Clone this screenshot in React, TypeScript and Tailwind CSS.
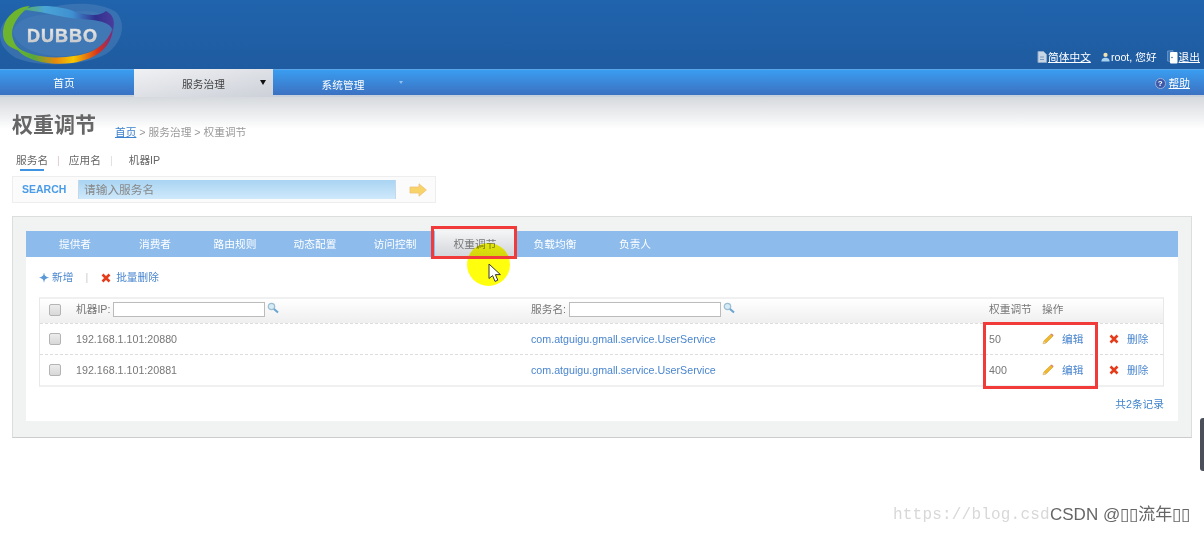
import React from "react";

const font = { fontFamily: '"Liberation Sans","Noto Sans CJK SC",sans-serif' };

function Logo() {
  return (
    <svg width="124" height="68" viewBox="0 0 124 68" className="shrink-0">
      <defs>
        <linearGradient id="ring" x1="0" y1="0" x2="1" y2="0">
          <stop offset="0" stopColor="#6cb52d" />
          <stop offset="0.2" stopColor="#58a83a" />
          <stop offset="0.42" stopColor="#e98a0c" />
          <stop offset="0.6" stopColor="#f5c800" />
          <stop offset="0.85" stopColor="#d9301c" />
          <stop offset="1" stopColor="#7a2a80" />
        </linearGradient>
        <linearGradient id="top" x1="0" y1="0" x2="1" y2="0">
          <stop offset="0" stopColor="#5ab04a" />
          <stop offset="0.25" stopColor="#4aa4d6" />
          <stop offset="0.55" stopColor="#3f8fd0" />
          <stop offset="0.8" stopColor="#30308e" />
          <stop offset="1" stopColor="#4a3c9c" />
        </linearGradient>
        <linearGradient id="word" x1="0" y1="0" x2="0" y2="1">
          <stop offset="0" stopColor="#f2f2f2" />
          <stop offset="1" stopColor="#b9bcc0" />
        </linearGradient>
      </defs>
      <path d="M0 33C2 14 24 6 52 7C74 2 100 2 116 12C126 22 124 42 106 54C84 66 40 68 16 58C6 52 -1 44 0 33Z" fill="#4d7fb8" opacity="0.55" />
      <path d="M13 33C15 18 36 13 60 15C84 8 106 10 111 24C114 38 100 50 80 54C56 60 20 54 13 33Z" fill="#3f78b4" />
      <path d="M3 34C3 18 15 7 30 6C22 12 12 22 12 34C13 43 17 48 24 52C11 49 3 44 3 34Z" fill="#6db52e" />
      <path d="M14 45C24 54 44 59 66 57C88 55 104 50 113 28C112 46 98 59 72 63C46 66 22 60 14 45Z" fill="url(#ring)" />
      <path d="M22 10C36 3 62 6 76 12C90 16 100 16 106 11C114 15 115 22 113 30C108 20 94 20 78 19C58 17 38 10 22 10Z" fill="url(#top)" />
      <text x="27" y="42" fontFamily="Liberation Sans" fontWeight="700" fontSize="18" letterSpacing="1" fill="url(#word)" stroke="#d8d8d8" strokeWidth="0.5">DUBBO</text>
    </svg>
  );
}

function Pencil() {
  return (
    <svg width="12" height="12" viewBox="0 0 12 12" className="shrink-0">
      <path d="M1 10.8L1.8 8 8.8 1.2 10.9 3.2 3.9 10.1Z" fill="#f0b92c" stroke="#c98b1a" strokeWidth="0.5" />
      <path d="M8.8 1.2L9.7 .4 11.6 2.3 10.9 3.2Z" fill="#d9776a" />
      <path d="M1 10.8L1.8 8 3.9 10.1Z" fill="#e8d2a8" />
    </svg>
  );
}

function Cross({ s = 10 }: { s?: number }) {
  return (
    <svg width={s} height={s} viewBox="0 0 10 10" className="shrink-0">
      <path d="M1.5 1.5L8.5 8.5M8.5 1.5L1.5 8.5" stroke="#e53d1c" strokeWidth="2.6" />
    </svg>
  );
}

function Lens() {
  return (
    <svg width="12" height="12" viewBox="0 0 12 12" className="shrink-0">
      <circle cx="4.5" cy="4.5" r="3.2" fill="#d5ebf6" stroke="#9dbdd2" strokeWidth="1.2" />
      <path d="M7 7L11 10.6" stroke="#6aa5d0" strokeWidth="2" />
    </svg>
  );
}

function Check() {
  return <span className="block w-[12px] h-[12px] rounded-[2px] border border-[#b4b4b4] bg-gradient-to-b from-[#ececec] to-[#d8d8d8]" />;
}

const topTabs = ["提供者", "消费者", "路由规则", "动态配置", "访问控制"];
const rows = [
  { ip: "192.168.1.101:20880", w: "50" },
  { ip: "192.168.1.101:20881", w: "400" },
];

export default function App() {
  return (
    <div className="relative w-[1204px] h-[533px] overflow-hidden bg-white text-[10.7px] text-[#666666]" style={font}>
      <header className="h-[69px] flex justify-between bg-gradient-to-b from-[#2064ad] to-[#1f5ba0]">
        <Logo />
        <div className="flex items-end pr-[4px] pb-[4px] text-white">
          <span className="flex items-center gap-px">
            <svg width="10" height="12" viewBox="0 0 10 12"><path d="M1 .5H6.5L9.5 3.5V11.5H1Z" fill="#c9d6e6" stroke="#8fa9c8" /><path d="M3 6H7M3 8.5H7" stroke="#7f9abd" /></svg>
            <span className="underline">简体中文</span>
          </span>
          <span className="ml-[10px] flex items-center gap-px">
            <svg width="9" height="12" viewBox="0 0 11 12"><circle cx="5.5" cy="3.5" r="2.6" fill="#f2e3b0" /><path d="M.5 11.5C.5 8 3 7 5.5 7S10.5 8 10.5 11.5Z" fill="#a8d2f0" /></svg>
            <span>root, 您好</span>
          </span>
          <span className="ml-[10px] flex items-center gap-px">
            <svg width="11" height="14" viewBox="0 0 11 14"><path d="M.5 1L6 .5V12.5L.5 11Z" fill="#3d78ba" stroke="#7ea6d4" strokeWidth="0.6" /><rect x="3" y="2" width="7.5" height="11.5" rx="1" fill="#ffffff" /><circle cx="5" cy="7.5" r="0.8" fill="#3a6aa8" /></svg>
            <span className="underline">退出</span>
          </span>
        </div>
      </header>

      <nav className="h-[28px] flex border-t border-b-2 border-t-[#5aa5ea] border-b-[#c8d0dc] bg-gradient-to-b from-[#399df0] to-[#3b71c1] text-white">
        <div className="w-[134px] flex items-center justify-center pr-[6px] pt-[2px]">首页</div>
        <div className="relative w-[139px] flex items-center justify-center pt-[3px] -mt-px -mb-[2px] bg-gradient-to-br from-[#f0f1f3] to-[#ccd0d8] text-[#444444]">
          服务治理
          <span className="absolute right-[7px] top-[11px] border-x-[3px] border-t-[5px] border-x-transparent border-t-[#111111]" />
        </div>
        <div className="relative w-[140px] flex items-center justify-center pt-[5px]">
          系统管理
          <span className="absolute right-[10px] top-[11px] border-x-[2px] border-t-[3px] border-x-transparent border-t-[#8fc0f0]" />
        </div>
        <div className="ml-auto flex items-center gap-[3px] pr-[14px] pt-[2px]">
          <span className="w-[11px] h-[11px] rounded-full bg-[#3c58a8] border border-[#9db0d8] text-[8px] leading-[9px] text-center font-bold">?</span>
          <span className="underline">帮助</span>
        </div>
      </nav>

      <main className="bg-gradient-to-b from-[#d6d9dd] via-white via-[32px] to-white px-[12px] pt-[14px]">
        <div className="flex items-end h-[28px]">
          <h1 className="text-[21px] leading-[28px] font-bold text-[#666666]">权重调节</h1>
          <div className="ml-[19px] mb-[-1px] text-[#999999]">
            <span className="text-[#3c82cc] underline">首页</span> &gt; 服务治理 &gt; 权重调节
          </div>
        </div>

        <div className="flex items-center h-[18px] mt-[12px] pl-[4px] text-[#666666]">
          <span className="relative">
            服务名
            <span className="absolute left-[4px] -bottom-[3px] w-[24px] h-[2px] bg-[#3f93e3]" />
          </span>
          <span className="mx-[9px] text-[#dccccc]">|</span>
          <span>应用名</span>
          <span className="mx-[9px] text-[#dddddd]">|</span>
          <span className="ml-[7px]">机器IP</span>
        </div>

        <div className="w-[424px] h-[27px] mt-[7px] flex items-center border border-[#eeeeee] bg-[#fbfbfb]">
          <span className="w-[65px] pl-[9px] text-[10.5px] font-bold text-[#4a9be8]">SEARCH</span>
          <div className="w-[318px] h-[19px] flex items-center pl-[5px] bg-gradient-to-b from-[#a9d4f2] to-[#cfe9fb] border-x border-[#c4d8e8] text-[11.7px] text-[#888888]">请输入服务名</div>
          <svg width="18" height="14" viewBox="0 0 18 14" className="ml-[13px]">
            <path d="M1 4H10V.8L17.4 7 10 13.2V10H1Z" fill="#f8d468" stroke="#eec27a" strokeWidth="0.8" />
          </svg>
        </div>

        <section className="w-[1180px] h-[222px] mt-[13px] pt-[14px] pl-[13px] pr-[13px] pb-[16px] bg-[#f1f3f3] border border-[#dcdedd] border-b-[#cccccc]">
          <div className="h-full bg-white">
            <div className="h-[26px] flex items-center pl-[9px] bg-[#8cbbec] text-white">
              {topTabs.map((t) => (
                <span key={t} className="w-[80px] text-center whitespace-nowrap">{t}</span>
              ))}
              <span className="w-[80px] h-full flex items-center justify-center bg-gradient-to-b from-[#f4f5f6] to-[#d2d5da] text-[#777777]">权重调节</span>
              <span className="w-[80px] text-center">负载均衡</span>
              <span className="w-[80px] text-center">负责人</span>
            </div>

            <div className="h-[40px] flex items-center pl-[13px] pt-[1px] text-[#4a86cf]">
              <span className="text-[#5a98d8] text-[12px] font-bold leading-none mr-[3px]">✦</span>
              <span>新增</span>
              <span className="mx-[12px] text-[#cccccc]">|</span>
              <span className="ml-[1px]"><Cross /></span>
              <span className="ml-[5px]">批量删除</span>
            </div>

            <div className="ml-[13px] mr-[14px] border-2 border-[#f0f0f0] border-x border-x-[#e8e8e8] text-[#777777]">
              <div className="h-[24px] pb-[3px] flex items-center bg-gradient-to-b from-white to-[#efefef]">
                <span className="w-[36px] pl-[9px]"><Check /></span>
                <span className="w-[455px] flex items-center">
                  机器IP:
                  <span className="w-[152px] h-[15px] ml-[3px] border border-[#bbbbbb] bg-white" />
                  <span className="ml-[2px] -mt-[3px]"><Lens /></span>
                </span>
                <span className="w-[458px] flex items-center">
                  服务名:
                  <span className="w-[152px] h-[15px] ml-[3px] border border-[#bbbbbb] bg-white" />
                  <span className="ml-[2px] -mt-[3px]"><Lens /></span>
                </span>
                <span className="w-[53px]">权重调节</span>
                <span>操作</span>
              </div>
              {rows.map((r) => (
                <div key={r.ip} className="h-[31px] flex items-center border-t border-dashed border-[#dddddd]">
                  <span className="w-[36px] pl-[9px]"><Check /></span>
                  <span className="w-[455px] text-[#777777]">{r.ip}</span>
                  <span className="w-[458px] text-[#4a86cf]">com.atguigu.gmall.service.UserService</span>
                  <span className="w-[53px]">{r.w}</span>
                  <span className="w-[67px] flex items-center gap-[8px] text-[#4a86cf]"><Pencil />编辑</span>
                  <span className="flex items-center gap-[8px] text-[#4a86cf]"><Cross />删除</span>
                </div>
              ))}
            </div>

            <div className="ml-[13px] mr-[14px] mt-[9px] text-right text-[#3f85cc]">共2条记录</div>
          </div>
        </section>
      </main>

      {/* overlays from the screen recording */}
      <div className="absolute left-[467px] top-[243px] w-[43px] h-[43px] rounded-full bg-[#ffff00]/95 mix-blend-multiply" />
      <svg width="14" height="20" viewBox="0 0 14 20" className="absolute left-[488px] top-[263px]">
        <path d="M1 1V15.5L4.6 12.6 7 18.4 9.8 17.2 7.4 11.6H12.4Z" fill="#ffffff" stroke="#333333" strokeWidth="1" />
      </svg>
      <div className="absolute left-[431px] top-[226px] w-[86px] h-[33px] border-[3px] border-[#f13a3a]" />
      <div className="absolute left-[983px] top-[322px] w-[115px] h-[67px] border-[3px] border-[#f13a3a]" />
      <div className="absolute left-[1200px] top-[418px] w-[6px] h-[53px] rounded-l-[3px] bg-[#4a4f5a]" />
      <div className="absolute left-[893px] top-[504px] text-[16px] leading-[22px] tracking-[0.2px] text-[#d8d8d8] whitespace-nowrap" style={{ fontFamily: '"Liberation Mono",monospace' }}>https://blog.csd</div>
      <div className="absolute left-[1050px] top-[504px] text-[17px] leading-[22px] text-[#666666] whitespace-nowrap">CSDN @▯▯流年▯▯</div>
    </div>
  );
}
